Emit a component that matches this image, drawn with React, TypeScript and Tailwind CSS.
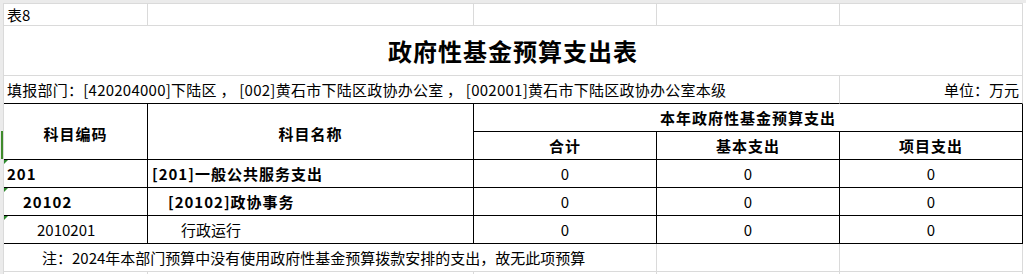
import React from "react";

const grid = "border-[#dadada]";
const ink = "border-black";

type CellProps = {
  className?: string;
  children?: React.ReactNode;
  flag?: boolean;
};

// small green triangle Excel draws for numbers stored as text
function Flag() {
  return (
    <svg className="absolute left-0 top-0" width="4" height="4" viewBox="0 0 4 4">
      <polygon points="0,0 4,0 0,4" fill="#2f8a2f" />
    </svg>
  );
}

function Cell({ className = "", children, flag }: CellProps) {
  return (
    <div className={`relative flex items-center whitespace-nowrap border-r border-b ${className}`}>
      {flag && <Flag />}
      {children}
    </div>
  );
}

const rows = [
  { code: "201", name: "[201]一般公共服务支出", bold: true, codePad: "pl-[3px]", namePad: "pl-[4px]" },
  { code: "20102", name: "[20102]政协事务", bold: true, codePad: "pl-[19px]", namePad: "pl-[20px]" },
  { code: "2010201", name: "行政运行", bold: false, codePad: "pl-[33px]", namePad: "pl-[33px]" },
];

export default function App() {
  return (
    <div
      className="relative w-[1026px] h-[274px] overflow-hidden bg-white text-black text-[15px] leading-none"
      style={{ fontFamily: '"Noto Sans CJK SC", "Noto Sans", sans-serif' }}
    >
      <div className="h-[3px] bg-[#ebebeb]" />
      <div className="flex">
        <div className="w-[3px] shrink-0 bg-[#ebebeb]" />
        <div className="grid grid-cols-[144px_326px_183px_183px_183px] grid-rows-[22px_50px_28px_28px_28px_28px_28px_28px_28px_4px] border-l border-t border-[#dadada]">
          {/* 表8 */}
          <Cell className={`${grid} pl-[3px]`}>表8</Cell>
          <Cell className={grid} />
          <Cell className={grid} />
          <Cell className={grid} />
          <Cell className={grid} />

          {/* title */}
          <Cell className={`${grid} col-span-5 justify-center pt-[1px]`}>
            <span className="text-[24px] font-bold tracking-[1px]">政府性基金预算支出表</span>
          </Cell>

          {/* unit line */}
          <div className={`col-span-4 flex items-center whitespace-nowrap border-r border-b ${grid} border-b-black pl-[3px] tracking-[0.25px]`}>
            填报部门：[420204000]下陆区 ， [002]黄石市下陆区政协办公室 ， [002001]黄石市下陆区政协办公室本级
          </div>
          <div className={`flex items-center justify-end border-r border-b ${grid} border-b-black pr-[3px]`}>
            单位：万元
          </div>

          {/* table header */}
          <Cell className={`${ink} row-span-2 justify-center pt-[3px] font-bold tracking-[1px]`}>科目编码</Cell>
          <Cell className={`${ink} row-span-2 justify-center pt-[3px] font-bold tracking-[1px]`}>科目名称</Cell>
          <Cell className={`${ink} col-span-3 justify-center font-bold tracking-[1px]`}>本年政府性基金预算支出</Cell>
          <Cell className={`${ink} justify-center font-bold tracking-[1px]`}>合计</Cell>
          <Cell className={`${ink} justify-center font-bold tracking-[1px]`}>基本支出</Cell>
          <Cell className={`${ink} justify-center font-bold tracking-[1px]`}>项目支出</Cell>

          {/* data */}
          {rows.map((r) => (
            <React.Fragment key={r.code}>
              <Cell flag className={`${ink} ${r.codePad} ${r.bold ? "font-bold tracking-[1px]" : ""}`}>
                {r.code}
              </Cell>
              <Cell className={`${ink} ${r.namePad} ${r.bold ? "font-bold tracking-[1px]" : ""}`}>{r.name}</Cell>
              <Cell className={`${ink} justify-center`}>0</Cell>
              <Cell className={`${ink} justify-center`}>0</Cell>
              <Cell className={`${ink} justify-center`}>0</Cell>
            </React.Fragment>
          ))}

          {/* note */}
          <Cell className={`${grid} col-span-3 pl-[38px]`}>
            注：2024年本部门预算中没有使用政府性基金预算拨款安排的支出，故无此项预算
          </Cell>
          <Cell className={grid} />
          <Cell className={grid} />

          <Cell className={grid} />
          <Cell className={grid} />
          <Cell className={grid} />
          <Cell className={grid} />
          <Cell className={grid} />
        </div>
      </div>

      {/* selected row marker on the row-header edge */}
      <div className="absolute left-[1px] top-[131px] h-[28px] w-[2px] bg-[#3f8b2c]" />
    </div>
  );
}
